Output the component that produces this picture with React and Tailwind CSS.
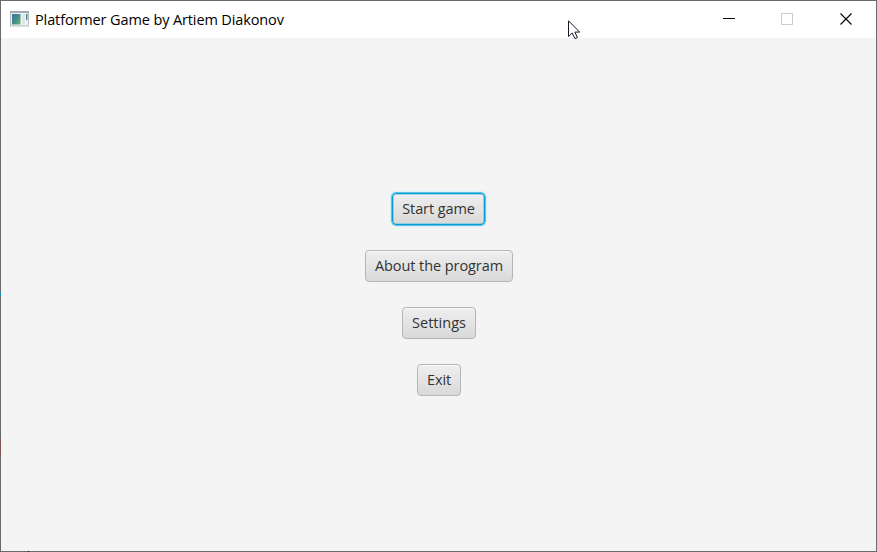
const menu = [
  { label: 'Start game', size: 'w-[93px] mr-px', text: 'tracking-[-0.1px]', focused: true },
  { label: 'About the program', size: 'w-[148px]', text: 'tracking-[-0.08px]' },
  { label: 'Settings', size: 'w-[74px]', text: 'tracking-[0.02px]' },
  { label: 'Exit', size: 'w-[44px]', text: 'tracking-[-0.1px]' },
];

function AppIcon() {
  return (
    <svg width="20" height="16" viewBox="0 0 20 16" className="-mt-px shrink-0">
      <defs>
        <linearGradient id="pane" x1="0" y1="0" x2="1" y2="1">
          <stop offset="0" stopColor="#3f73a3" />
          <stop offset="0.5" stopColor="#438c8c" />
          <stop offset="1" stopColor="#62b779" />
        </linearGradient>
      </defs>
      <rect x="0.5" y="0.5" width="18" height="14.5" fill="#f1f2f3" stroke="#b6babd" />
      <rect x="0" y="0" width="19" height="2" fill="#a5aaaf" />
      <rect x="2" y="3" width="8.5" height="10.5" fill="url(#pane)" />
      <rect x="12" y="3" width="3" height="10.5" fill="#e2e5e6" />
      <rect x="16" y="3" width="1.5" height="6" fill="url(#pane)" />
    </svg>
  );
}

function MenuButton({ label, size, text, focused }) {
  const frame = focused
    ? 'border-[#039ed3] shadow-[0_0_0_0.5px_#039ed3,0_0_2px_1px_#a5dff2,inset_0_0_0_0.5px_#4fbde0]'
    : 'border-[#b5b5b5] shadow-[inset_0_1px_0_#f8f8f8]';
  return (
    <button
      className={`${size} ${frame} flex h-8 items-center justify-center rounded-[4px] border bg-linear-to-b from-[#efefef] to-[#d9d9d9]`}
    >
      <span className={`${text} whitespace-nowrap text-[14.5px] leading-5 text-[#333333]`}>{label}</span>
    </button>
  );
}

export default function App() {
  return (
    <div className="relative flex h-[552px] w-[877px] flex-col border border-[#6b6a6b] bg-[#f4f4f4] font-['Open_Sans','Noto_Sans',sans-serif]">
      <header className="flex h-[37px] shrink-0 items-center bg-white pl-[9px]">
        <AppIcon />
        <h1 className="ml-[5px] mt-px whitespace-nowrap text-[14.5px] leading-5 tracking-[-0.12px] text-black">
          Platformer Game by Artiem Diakonov
        </h1>
        <div className="ml-auto flex h-full items-center">
          <svg width="153" height="37" viewBox="0 0 153 37" fill="none" shapeRendering="crispEdges">
            <path d="M0 17.5h12" stroke="#000" />
            <rect x="58.5" y="12.5" width="11" height="11" stroke="#cccccc" />
            <path d="M117.5 12.5l11 11M128.500 12.5l-11 11" stroke="#000" strokeWidth="1.1" shapeRendering="auto" />
          </svg>
        </div>
      </header>
      <main className="flex flex-1 flex-col items-center justify-center gap-[25px] pl-[1px]">
        {menu.map((item) => (
          <MenuButton key={item.label} {...item} />
        ))}
      </main>
      <svg className="absolute left-[567px] top-[19px]" width="13" height="20" viewBox="0 0 13 20">
        <path d="M0.500 0.800V16.500L4.200 13L7 18.700L9.400 17.600L6.900 12.100H11.700Z" fill="#fff" stroke="#17172a" />
      </svg>
      <div className="absolute -left-px top-[291px] h-1 w-px bg-[#258cc0]" />
      <div className="absolute -left-px top-[437px] h-[18px] w-px bg-[#7d5454]" />
      <div className="absolute -bottom-px left-[27px] size-px bg-[#111111]" />
    </div>
  );
}
